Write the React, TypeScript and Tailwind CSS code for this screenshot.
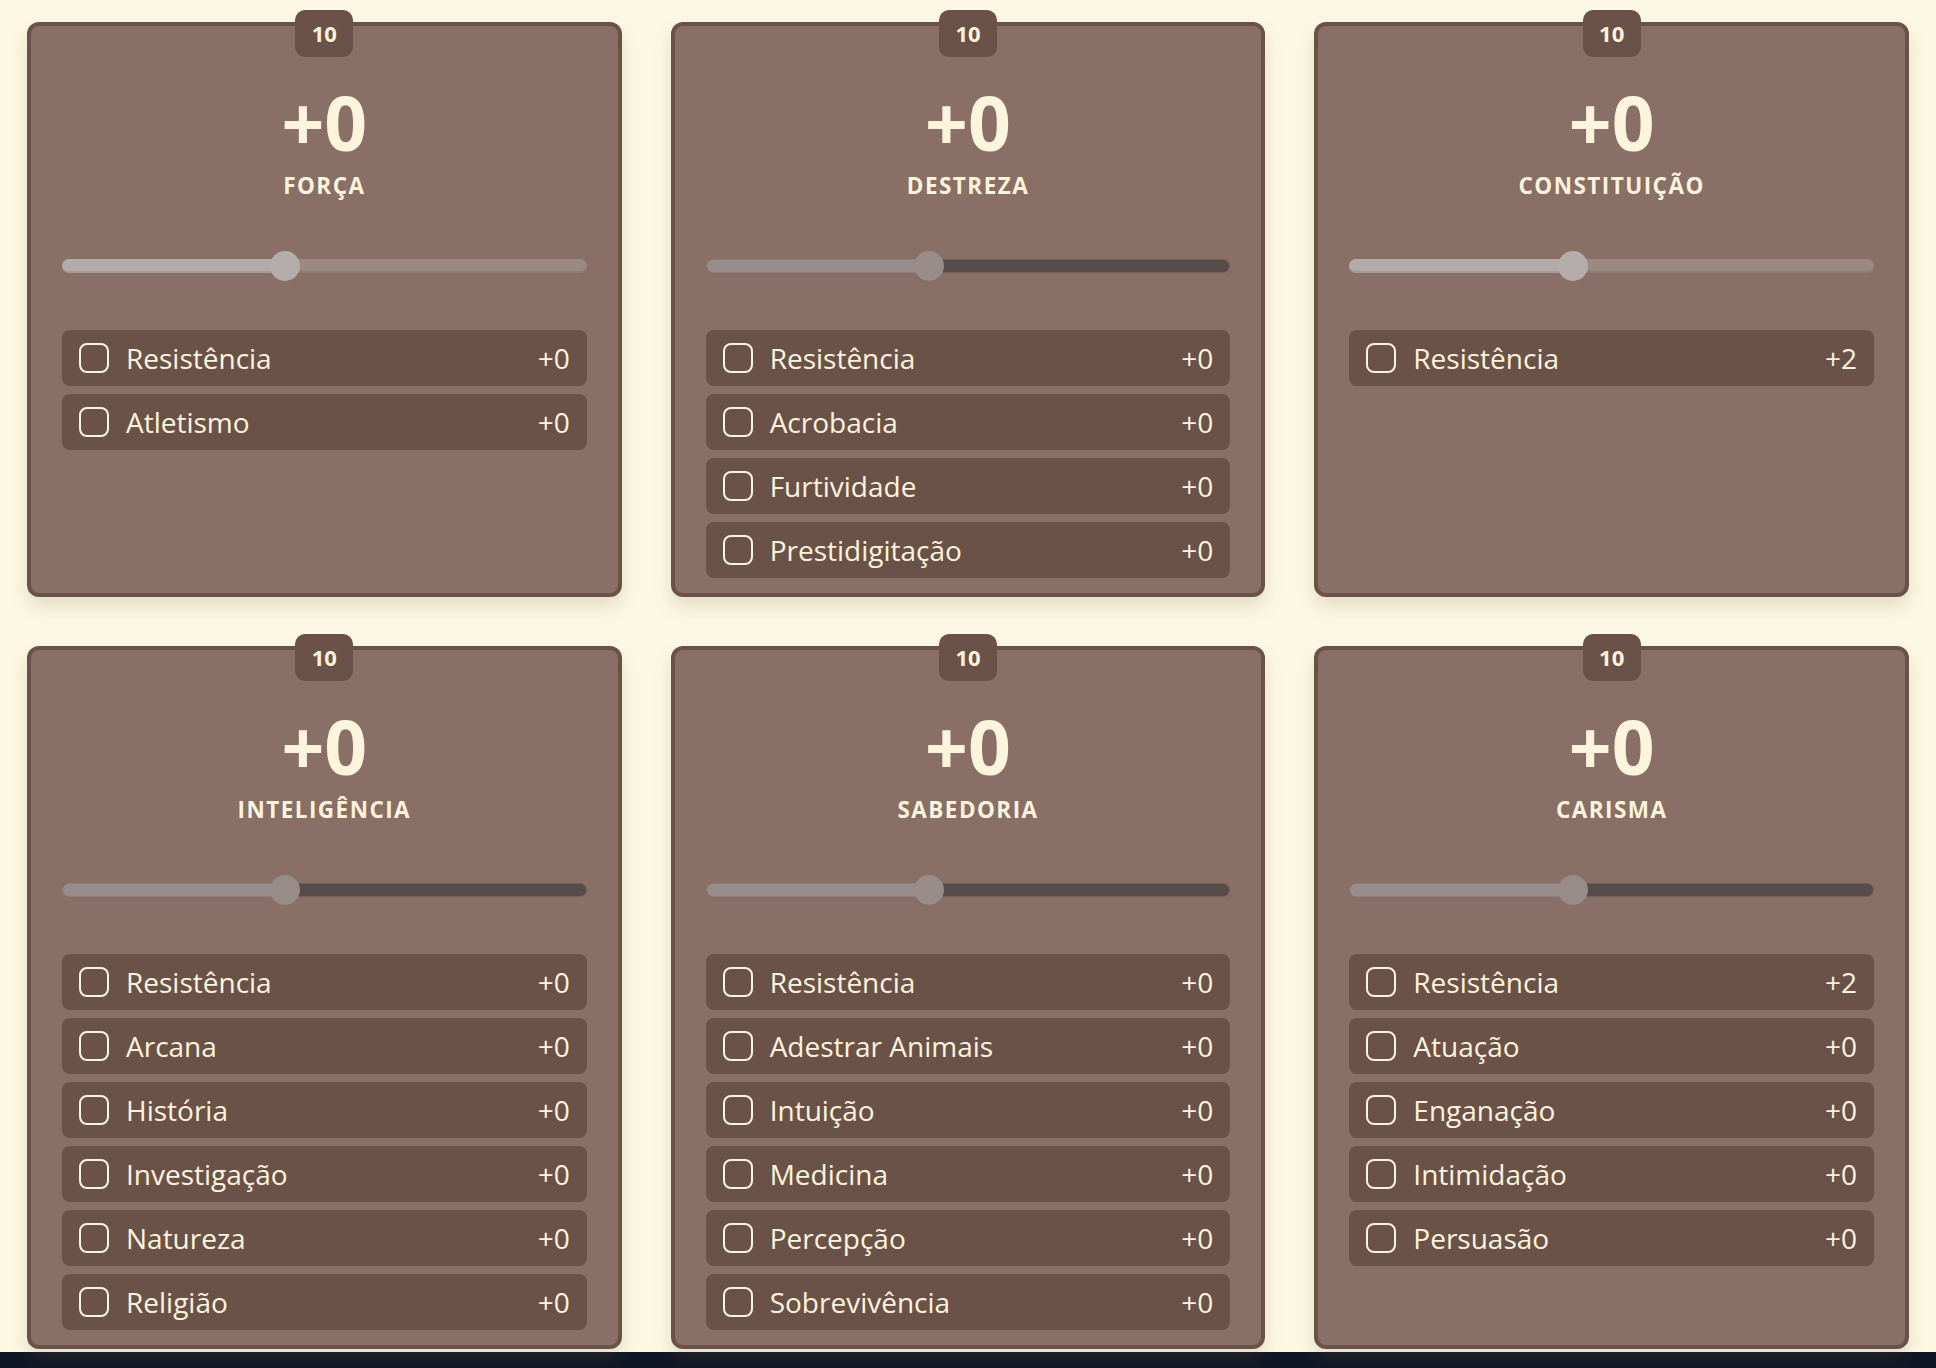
import React from "react";

type Skill = { name: string; bonus: string };
type Attr = { label: string; score: number; mod: string; light: boolean; skills: Skill[] };

const attrs: Attr[] = [
  {
    label: "FORÇA",
    score: 10,
    mod: "+0",
    light: true,
    skills: [
      { name: "Resistência", bonus: "+0" },
      { name: "Atletismo", bonus: "+0" },
    ],
  },
  {
    label: "DESTREZA",
    score: 10,
    mod: "+0",
    light: false,
    skills: [
      { name: "Resistência", bonus: "+0" },
      { name: "Acrobacia", bonus: "+0" },
      { name: "Furtividade", bonus: "+0" },
      { name: "Prestidigitação", bonus: "+0" },
    ],
  },
  {
    label: "CONSTITUIÇÃO",
    score: 10,
    mod: "+0",
    light: true,
    skills: [{ name: "Resistência", bonus: "+2" }],
  },
  {
    label: "INTELIGÊNCIA",
    score: 10,
    mod: "+0",
    light: false,
    skills: [
      { name: "Resistência", bonus: "+0" },
      { name: "Arcana", bonus: "+0" },
      { name: "História", bonus: "+0" },
      { name: "Investigação", bonus: "+0" },
      { name: "Natureza", bonus: "+0" },
      { name: "Religião", bonus: "+0" },
    ],
  },
  {
    label: "SABEDORIA",
    score: 10,
    mod: "+0",
    light: false,
    skills: [
      { name: "Resistência", bonus: "+0" },
      { name: "Adestrar Animais", bonus: "+0" },
      { name: "Intuição", bonus: "+0" },
      { name: "Medicina", bonus: "+0" },
      { name: "Percepção", bonus: "+0" },
      { name: "Sobrevivência", bonus: "+0" },
    ],
  },
  {
    label: "CARISMA",
    score: 10,
    mod: "+0",
    light: false,
    skills: [
      { name: "Resistência", bonus: "+2" },
      { name: "Atuação", bonus: "+0" },
      { name: "Enganação", bonus: "+0" },
      { name: "Intimidação", bonus: "+0" },
      { name: "Persuasão", bonus: "+0" },
    ],
  },
];

// slider range, thumb sits at score
const MIN = 2;
const MAX = 21;

function Slider({ value, light }: { value: number; light: boolean }) {
  const pct = (value - MIN) / (MAX - MIN);
  const left = `calc(15px + ${pct} * (100% - 30px))`;
  return (
    <div className="relative h-[30px] w-full">
      <div
        className={
          light
            ? "absolute left-0 right-0 top-[8px] h-[14px] rounded-full bg-[#9c8882] border-b-2 border-[#8f7c76]"
            : "absolute left-0 right-0 top-[8px] h-[14px] rounded-full bg-[#574c49] border border-[#6e625e]"
        }
      />
      <div
        className={
          light
            ? "absolute left-0 top-[8px] h-[14px] rounded-l-full bg-[#b3abaa] border-b-2 border-[#a39a98]"
            : "absolute left-0 top-[8px] h-[14px] rounded-l-full bg-[#978c8a] border border-[#8a7f7c]"
        }
        style={{ width: left }}
      />
      <div
        className={
          light
            ? "absolute top-0 h-[30px] w-[30px] -translate-x-1/2 rounded-full bg-[#b5adac]"
            : "absolute top-0 h-[30px] w-[30px] -translate-x-1/2 rounded-full bg-[#978c8a]"
        }
        style={{ left }}
      />
    </div>
  );
}

function SkillRow({ skill }: { skill: Skill }) {
  return (
    <div className="flex h-[56px] items-center rounded-lg bg-[#6b5248] pl-[17px] pr-[17px] text-[28px] leading-none text-[#fcf4dd]">
      <span className="h-[30px] w-[30px] shrink-0 rounded-[8px] border-2 border-[#fcf4dd]" />
      <span className="ml-[17px] flex-1">{skill.name}</span>
      <span>{skill.bonus}</span>
    </div>
  );
}

function AttrCard({ attr }: { attr: Attr }) {
  return (
    <div className="relative flex flex-col rounded-xl border-4 border-[#6b5248] bg-[#896f65] px-[31px] pb-[15px] shadow-[0_10px_18px_rgba(120,100,60,0.18)]">
      <div className="absolute -top-[16px] left-1/2 flex h-[47px] w-[58px] -translate-x-1/2 items-center justify-center rounded-[10px] bg-[#6b5248] text-[22px] font-bold text-[#fcf4dd]">
        {attr.score}
      </div>
      <div className="mt-[59px] text-center text-[75px] font-bold leading-[75px] text-[#fcf4dd]">
        {attr.mod}
      </div>
      <div className="mt-[15px] text-center text-[22.5px] font-bold leading-[22px] tracking-[0.065em] text-[#fcf4dd]">
        {attr.label}
      </div>
      <div className="mt-[54px]">
        <Slider value={attr.score} light={attr.light} />
      </div>
      <div className="mt-[49px] flex flex-col gap-2">
        {attr.skills.map((s) => (
          <SkillRow key={s.name} skill={s} />
        ))}
      </div>
    </div>
  );
}

export default function App() {
  return (
    <div
      className="flex min-h-screen flex-col bg-[#0f1626]"
      style={{ fontFamily: '"Open Sans", "Noto Sans", sans-serif' }}
    >
      <div className="bg-[#fdf8e4] px-[27px] pt-[22px] pb-[3px]">
        <div className="grid grid-cols-3 gap-[49px]">
          {attrs.map((a) => (
            <AttrCard key={a.label} attr={a} />
          ))}
        </div>
      </div>
    </div>
  );
}
